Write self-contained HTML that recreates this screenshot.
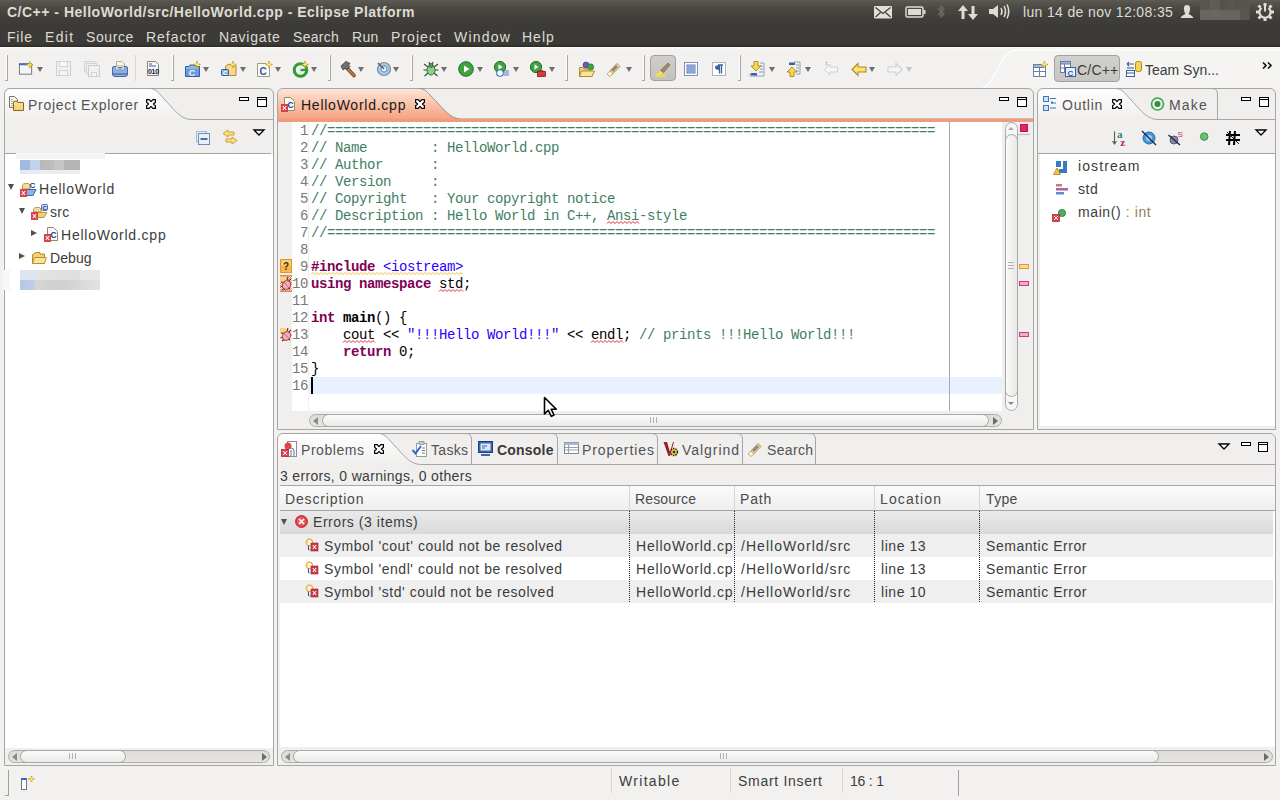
<!DOCTYPE html>
<html><head><meta charset="utf-8">
<style>
*{box-sizing:border-box;margin:0;padding:0}
html,body{width:1280px;height:800px;overflow:hidden;background:#f2f1f0;font-family:"Liberation Sans",sans-serif;position:relative}
.a{position:absolute}
svg{overflow:visible}
.t{position:absolute;white-space:pre;font-family:"Liberation Sans",sans-serif;font-size:14px;color:#3c3c3c;line-height:16px}
#hdr{left:0;top:0;width:1280px;height:47px;background:linear-gradient(#5e5b55 0px,#55524c 3px,#4a4843 9px,#3f3e3a 18px,#3c3b37 26px,#3b3a36 44px,#302f2b 46px,#2a2926 47px)}
#title{left:7px;top:4px;font-weight:bold;font-size:14px;color:#dfdbd2;letter-spacing:0.5px}
.menu{top:29px;color:#dfdbd2;font-size:14px;letter-spacing:0.3px}
#tb{left:0;top:47px;width:1280px;height:41px;background:linear-gradient(#fbfbfa 0px,#f4f3f2 2px,#f2f1f0 4px)}
.sep{position:absolute;top:55px;width:1px;height:26px;background:#a9a7a3;box-shadow:-1px 0 0 #fff}.sep:after{content:"";position:absolute;left:-2px;bottom:0;width:2px;height:1px;background:#a9a7a3}.sep.faint{background:#d9d7d4;box-shadow:none}.sep.faint:after{display:none}
.dd{position:absolute;top:67px;width:0;height:0;border-left:3.5px solid transparent;border-right:3.5px solid transparent;border-top:5px solid #6f6f6f}
.dd.dis{border-top-color:#c4c4c4}
.ic{position:absolute;top:61px;width:16px;height:16px}
.pbox{position:absolute;border:1px solid #a6a6a6;border-radius:6px 6px 0 0;background:#f0efee}
.tab{letter-spacing:0.55px;color:#535353}
.tree{letter-spacing:0.6px;color:#3c3c3c}
.x{position:absolute;width:10px;height:10px}
.minb{position:absolute;width:10px;height:4px;border:1px solid #000;border-width:1px 1px 1px 1px;background:#fff}
.maxb{position:absolute;width:10px;height:10px;border:1px solid #000;background:linear-gradient(#fff 0,#fff 1px,#000 1px,#000 2px,#fff 2px)}
.tri-d{position:absolute;width:0;height:0;border-left:3.5px solid transparent;border-right:3.5px solid transparent;border-top:6px solid #505050}
.tri-r{position:absolute;width:0;height:0;border-top:3.5px solid transparent;border-bottom:3.5px solid transparent;border-left:6px solid #505050}
.code{position:absolute;font-family:"Liberation Mono",monospace;font-size:14px;letter-spacing:-0.4px;line-height:17px;white-space:pre;color:#000;padding-top:1px}
.cm{color:#3f7f5f}
.kw{color:#7f0055;font-weight:bold}
.st{color:#2a00ff}
.sqr{text-decoration:underline wavy #ff3030;text-decoration-thickness:1px;text-underline-offset:2px}
.sqy{text-decoration:underline wavy #f0c040;text-decoration-thickness:1px;text-underline-offset:2px}
.hsb{position:absolute;height:13px;border:1px solid #aeaca8;border-radius:7px;background:linear-gradient(#dedcd9,#e6e4e1)}
.thumb{position:absolute;height:13px;border:1px solid #a9a7a3;border-radius:7px;background:linear-gradient(#fbfbfb,#ebeae8)}
.vsb{position:absolute;width:13px;border:1px solid #aeaca8;border-radius:7px;background:#f7f7f7}
.vthumb{position:absolute;width:13px;border:1px solid #a9a7a3;border-radius:7px;background:linear-gradient(90deg,#fbfbfb,#e9e8e6)}
.grip{position:absolute;width:7px;height:6px;border-left:1px solid #b0b0b0;border-right:1px solid #b0b0b0;background:linear-gradient(90deg,transparent 2px,#b0b0b0 2px,#b0b0b0 3px,transparent 3px)}
.vgrip{position:absolute;width:6px;height:7px;border-top:1px solid #b0b0b0;border-bottom:1px solid #b0b0b0;background:linear-gradient(transparent 2px,#b0b0b0 2px,#b0b0b0 3px,transparent 3px)}
.arrl{position:absolute;width:0;height:0;border-top:4px solid transparent;border-bottom:4px solid transparent;border-right:5px solid #8a8a8a}
.arrr{position:absolute;width:0;height:0;border-top:4px solid transparent;border-bottom:4px solid transparent;border-left:5px solid #6a6a6a}
.arru{position:absolute;width:0;height:0;border-left:3.5px solid transparent;border-right:3.5px solid transparent;border-bottom:3.5px solid #b0a8a8}
.arrd{position:absolute;width:0;height:0;border-left:3.5px solid transparent;border-right:3.5px solid transparent;border-top:3.5px solid #8a8a8a}
.th{top:491px;letter-spacing:0.85px;color:#4a4a4a}
.row{letter-spacing:0.55px;color:#3c3c3c}
.colsep{position:absolute;top:486px;width:1px;height:24px;background:#d6d6d6}
.dots{position:absolute;top:511px;width:1px;height:92px;background:repeating-linear-gradient(#222 0,#222 1px,transparent 1px,transparent 2px)}
</style></head><body>
<div id="hdr" class="a"></div>
<div id="title" class="t">C/C++ - HelloWorld/src/HelloWorld.cpp - Eclipse Platform</div>
<div class="t menu" style="left:7px;letter-spacing:0.8px">File</div>
<div class="t menu" style="left:45px;letter-spacing:1.3px">Edit</div>
<div class="t menu" style="left:86px;letter-spacing:0.6px">Source</div>
<div class="t menu" style="left:146px;letter-spacing:0.97px">Refactor</div>
<div class="t menu" style="left:219px;letter-spacing:0.8px">Navigate</div>
<div class="t menu" style="left:293px;letter-spacing:0.3px">Search</div>
<div class="t menu" style="left:352px;letter-spacing:0.3px">Run</div>
<div class="t menu" style="left:391px;letter-spacing:1.05px">Project</div>
<div class="t menu" style="left:454px;letter-spacing:1.2px">Window</div>
<div class="t menu" style="left:522px;letter-spacing:1.0px">Help</div>
<!-- indicators -->
<svg class="a" style="left:874px;top:6px" width="18" height="13" viewBox="0 0 18 13"><rect x="0" y="0" width="18" height="12.5" rx="1" fill="#e2dfd7"/><path d="M1.5 1.5 L9 7.5 L16.5 1.5 M1.5 11 L6.5 6.5 M16.5 11 L11.5 6.5" fill="none" stroke="#3c3b37" stroke-width="1.1"/></svg>
<svg class="a" style="left:905px;top:6px" width="21" height="12" viewBox="0 0 21 12"><rect x="1" y="1" width="17" height="10" rx="1.5" fill="none" stroke="#dfdbd2" stroke-width="1.5"/><rect x="3" y="3" width="13" height="6" fill="#dfdbd2"/><rect x="18.5" y="4" width="2" height="4" fill="#dfdbd2"/></svg>
<svg class="a" style="left:936px;top:3px" width="10" height="18" viewBox="0 0 10 18"><path d="M2 5 L8 11 L5 14 L5 3 L8 6 L2 12" fill="none" stroke="#6e6c66" stroke-width="1.3"/></svg>
<svg class="a" style="left:957px;top:3px" width="22" height="19" viewBox="0 0 22 19"><path d="M6 2 L1 8 L4.5 8 L4.5 16 L7.5 16 L7.5 8 L11 8 Z" fill="#dfdbd2"/><path d="M16 17 L11 11 L14.5 11 L14.5 3 L17.5 3 L17.5 11 L21 11 Z" fill="#dfdbd2"/></svg>
<svg class="a" style="left:988px;top:3px" width="22" height="17" viewBox="0 0 22 17"><path d="M1 6 L5 6 L10 2 L10 15 L5 11 L1 11 Z" fill="#dfdbd2"/><path d="M13 5 Q15 8.5 13 12 M16 3 Q19 8.5 16 14 M19 1.5 Q22.5 8.5 19 15.5" fill="none" stroke="#dfdbd2" stroke-width="1.5"/></svg>
<div class="t" style="left:1023px;top:4px;color:#dfdbd2;font-size:14px;letter-spacing:0.35px">lun 14 de nov 12:08:35</div>
<svg class="a" style="left:1179px;top:4px" width="16" height="16" viewBox="0 0 16 16"><path d="M8 1 C10.5 1 11.3 3 11 5.5 C10.8 7.5 10 9 9.5 10 C11.5 11 14 12 14.5 14 L1.5 14 C2 12 4.5 11 6.5 10 C6 9 5.2 7.5 5 5.5 C4.7 3 5.5 1 8 1 Z" fill="#e0ddd5"/></svg>
<div class="a" style="left:1200px;top:0px;width:50px;height:10px;background:linear-gradient(90deg,#59554f 0,#59554f 10px,#625d57 10px,#5d5953 20px,#544f4a 20px,#5b5751 34px,#57534d 34px,#57534d 50px)"></div>
<div class="a" style="left:1200px;top:10px;width:50px;height:10px;background:linear-gradient(90deg,#6a655e 0,#6b665f 20px,#68635c 20px,#69645d 40px,#5a5651 40px,#57534e 50px)"></div>
<svg class="a" style="left:1256px;top:3px" width="18" height="18" viewBox="0 0 18 18"><g fill="#e0ddd5"><rect x="7.5" y="0" width="3" height="3"/><rect x="7.5" y="15" width="3" height="3"/><rect x="0" y="7.5" width="3" height="3"/><rect x="15" y="7.5" width="3" height="3"/><rect x="2" y="2" width="3" height="3" transform="rotate(45 3.5 3.5)"/><rect x="13" y="2" width="3" height="3" transform="rotate(45 14.5 3.5)"/><rect x="2" y="13" width="3" height="3" transform="rotate(45 3.5 14.5)"/><rect x="13" y="13" width="3" height="3" transform="rotate(45 14.5 14.5)"/></g><path d="M5.5 4.8 A5.6 5.6 0 1 0 12.5 4.8" fill="none" stroke="#e0ddd5" stroke-width="2.2"/><rect x="8" y="1.5" width="2" height="7" fill="#e0ddd5"/></svg>
<div id="tb" class="a"></div>
<!-- perspective area curve -->
<svg class="a" style="left:960px;top:47px" width="320" height="41" viewBox="0 0 320 41"><path d="M0 41 L22 41 C30 41 36 22 44 10 C48 4 52 3 60 3 L320 3 L320 41 Z" fill="#f5f4f3"/><path d="M22 41 C30 41 36 22 44 10 C48 4 52 3 60 3 L320 3" fill="none" stroke="#ffffff" stroke-width="1.2"/></svg>
<!-- grip and separators -->
<div class="sep" style="left:7px;top:55px;height:26px"></div>
<div class="sep faint" style="left:135px"></div>
<div class="sep" style="left:173px"></div>
<div class="sep" style="left:330px"></div>
<div class="sep" style="left:412px"></div>
<div class="sep" style="left:567px"></div>
<div class="sep" style="left:644px"></div>
<div class="sep" style="left:740px"></div>
<!-- dropdown arrows -->
<div class="dd" style="left:37px"></div>
<div class="dd" style="left:203px"></div>
<div class="dd" style="left:240px"></div>
<div class="dd" style="left:275px"></div>
<div class="dd" style="left:311px"></div>
<div class="dd" style="left:358px"></div>
<div class="dd" style="left:393px"></div>
<div class="dd" style="left:441px"></div>
<div class="dd" style="left:477px"></div>
<div class="dd" style="left:513px"></div>
<div class="dd" style="left:549px"></div>
<div class="dd" style="left:626px"></div>
<div class="dd" style="left:769px"></div>
<div class="dd" style="left:805px"></div>
<div class="dd" style="left:869px"></div>
<div class="dd dis" style="left:906px"></div>
<!-- new -->
<svg class="ic" style="left:18px" viewBox="0 0 17 16"><rect x="1.5" y="2.5" width="13" height="11" fill="#eef5fb" stroke="#7a7565"/><rect x="1" y="2" width="12" height="2" fill="#3f6fb5"/><path d="M12.5 0 L12.5 7 M9 3.5 L16 3.5" stroke="#d9a400" stroke-width="1.6"/><path d="M12.5 1.5 L12.5 5.5 M10.5 3.5 L14.5 3.5" stroke="#fff1a8" stroke-width="0.8"/></svg>
<!-- save disabled -->
<svg class="ic" style="left:56px" viewBox="0 0 16 16"><rect x="0.5" y="0.5" width="14" height="14" fill="#f0f0f0" stroke="#cfcfcf"/><rect x="3.5" y="0.5" width="8" height="5" fill="#f7f7f7" stroke="#d2d2d2"/><rect x="3.5" y="9.5" width="8" height="5" fill="#f4f4f4" stroke="#d2d2d2"/></svg>
<svg class="ic" style="left:84px" viewBox="0 0 16 16"><rect x="0.5" y="0.5" width="10" height="10" fill="#f2f2f2" stroke="#d0d0d0"/><rect x="2.5" y="2.5" width="10" height="10" fill="#f2f2f2" stroke="#d0d0d0"/><rect x="4.5" y="4.5" width="11" height="11" fill="#f0f0f0" stroke="#cccccc"/><rect x="7.5" y="11.5" width="5" height="4" fill="#f4f4f4" stroke="#d2d2d2"/></svg>
<!-- print -->
<svg class="ic" style="left:112px" viewBox="0 0 16 16"><path d="M4.5 0.5 L10 0.5 L12.5 3 L12.5 7 L4.5 7 Z" fill="#fdf6e0" stroke="#b9ad8c"/><path d="M0.5 7 Q0.5 5.5 2 5.5 L14 5.5 Q15.5 5.5 15.5 7 L15.5 13 Q15.5 15.5 13 15.5 L3 15.5 Q0.5 15.5 0.5 13 Z" fill="#8fb0dd" stroke="#46679f"/><rect x="4" y="5" width="8" height="4" fill="#fff" stroke="#8a8a8a" stroke-width="0.7"/><path d="M5.5 6.5 L10.5 6.5 M5.5 8 L10.5 8" stroke="#4a6ea8" stroke-width="0.9"/><rect x="1" y="12" width="14" height="2" fill="#5d82c0"/></svg>
<!-- 010 -->
<svg class="ic" style="left:147px" viewBox="0 0 16 16"><path d="M0.5 0.5 L8.5 0.5 L11.5 3.5 L11.5 14.5 L0.5 14.5 Z" fill="#f4f8fd" stroke="#8a8270"/><path d="M2 3 L5 3 M2 5 L9 5" stroke="#3a4a6a" stroke-width="0.9"/><text x="1" y="13" font-family="Liberation Sans" font-weight="bold" font-size="7" letter-spacing="-0.3" fill="#0e1e3e">010</text></svg>
<!-- C project -->
<svg class="ic" style="left:185px" viewBox="0 0 16 16"><path d="M0.5 5.5 L4 5.5 L5 4 L11 4 L11 5.5 L14.5 5.5 L14.5 15.5 L0.5 15.5 Z" fill="#8db3e2" stroke="#2f5fa6"/><path d="M1 8 L14 8 L14 15 L1 15 Z" fill="#6e9ad6"/><text x="3.8" y="14.5" font-family="Liberation Sans" font-weight="bold" font-size="9" fill="#eaf2ff">C</text><path d="M12 0 L12 7 M8.5 3.5 L15.5 3.5" stroke="#d9a400" stroke-width="1.6"/><path d="M12 1.5 L12 5.5 M10 3.5 L14 3.5" stroke="#fff1a8" stroke-width="0.8"/></svg>
<!-- folder new -->
<svg class="ic" style="left:221px" viewBox="0 0 16 16"><path d="M4.5 5.5 L7 3.5 L11 3.5 L11 5 L15 5 L15 14.5 L4.5 14.5 Z" fill="#f7d88a" stroke="#b38a2e"/><rect x="0.5" y="8.5" width="7" height="6" rx="1" fill="#8db3e2" stroke="#2f5fa6"/><text x="2" y="14" font-family="Liberation Sans" font-weight="bold" font-size="6" fill="#fff">C</text><path d="M12 0 L12 7 M8.5 3.5 L15.5 3.5" stroke="#d9a400" stroke-width="1.6"/><path d="M12 1.5 L12 5.5 M10 3.5 L14 3.5" stroke="#fff1a8" stroke-width="0.8"/></svg>
<!-- C class -->
<svg class="ic" style="left:257px" viewBox="0 0 16 16"><path d="M0.5 2.5 L9 2.5 L12.5 6 L12.5 15.5 L0.5 15.5 Z" fill="#fbfbf6" stroke="#9e9a8c"/><text x="2.5" y="13.5" font-family="Liberation Sans" font-weight="bold" font-size="10" fill="#2f55a8">C</text><path d="M12 0 L12 7 M8.5 3.5 L15.5 3.5" stroke="#d9a400" stroke-width="1.6"/><path d="M12 1.5 L12 5.5 M10 3.5 L14 3.5" stroke="#fff1a8" stroke-width="0.8"/></svg>
<!-- G green -->
<svg class="ic" style="left:293px" viewBox="0 0 16 16"><circle cx="7.5" cy="9" r="6.3" fill="none" stroke="#2f9a3a" stroke-width="3"/><path d="M7.5 9 L13 9" stroke="#2f9a3a" stroke-width="2.4"/><path d="M12 0 L12 7 M8.5 3.5 L15.5 3.5" stroke="#d9a400" stroke-width="1.6"/><path d="M12 1.5 L12 5.5 M10 3.5 L14 3.5" stroke="#fff1a8" stroke-width="0.8"/></svg>
<!-- hammer -->
<svg class="ic" style="left:340px" viewBox="0 0 16 16"><path d="M6 6 L14 14.5" stroke="#6b3f1a" stroke-width="3.6" stroke-linecap="round"/><path d="M6 6 L14 14.5" stroke="#c27a3c" stroke-width="2" stroke-linecap="round"/><path d="M1 5 L6 0.5 L10 2.5 L8.5 4 L10 5.5 L7 8.5 L5.5 7 L3 9 Z" fill="#707070" stroke="#3a3a3a" stroke-width="0.8"/></svg>
<!-- gear -->
<svg class="ic" style="left:376px" viewBox="0 0 16 16"><circle cx="8" cy="8" r="6.5" fill="#a9c6e0" stroke="#6f8fb0" stroke-width="1.2"/><circle cx="8" cy="8" r="3" fill="#e8f0f8" stroke="#6f8fb0"/><path d="M2 2 L8 8" stroke="#555" stroke-width="1.2"/></svg>
<!-- bug -->
<svg class="ic" style="left:423px" viewBox="0 0 16 16"><path d="M1 3 L5 6 M15 3 L11 6 M0.5 9 L4 9 M15.5 9 L12 9 M1.5 15 L5 12 M14.5 15 L11 12 M6 1 L7 4 M10 1 L9 4" stroke="#2f4f2f" stroke-width="1.1"/><ellipse cx="8" cy="9" rx="4" ry="5" fill="#8fcf8f" stroke="#2f6f3a"/><circle cx="8" cy="4.5" r="2" fill="#5f9f5f" stroke="#2f4f2f" stroke-width="0.8"/></svg>
<!-- run -->
<svg class="ic" style="left:458px" viewBox="0 0 16 16"><circle cx="8" cy="8" r="7.3" fill="#3fa33f" stroke="#1e6e24"/><path d="M6 4.5 L11.5 8 L6 11.5 Z" fill="#fff"/></svg>
<svg class="ic" style="left:494px" viewBox="0 0 16 16"><circle cx="6" cy="6" r="5.6" fill="#3fa33f" stroke="#1e6e24"/><path d="M4.5 3.3 L8.5 6 L4.5 8.7 Z" fill="#fff"/><circle cx="6" cy="12" r="3.3" fill="#fff" stroke="#3b6fc0" stroke-width="1.1"/><path d="M10 10 L15 10 M10 12 L15 12 M10 14 L15 14" stroke="#3b6fc0" stroke-width="0.9"/></svg>
<svg class="ic" style="left:530px" viewBox="0 0 16 16"><circle cx="6" cy="6" r="5.6" fill="#3fa33f" stroke="#1e6e24"/><path d="M4.5 3.3 L8.5 6 L4.5 8.7 Z" fill="#fff"/><rect x="7.5" y="10.5" width="8" height="5" fill="#d63a3a" stroke="#8e1c1c" stroke-width="0.8"/><path d="M10 10.5 L10 9.5 L13 9.5 L13 10.5" fill="none" stroke="#8e1c1c" stroke-width="0.8"/></svg>
<!-- open folder with balls -->
<svg class="ic" style="left:579px" viewBox="0 0 16 16"><circle cx="7" cy="4" r="3" fill="#6a5acd" stroke="#3a2a8d" stroke-width="0.6"/><circle cx="11.5" cy="6" r="3.2" fill="#3aa64a" stroke="#1d6e28" stroke-width="0.6"/><path d="M0.5 6.5 L4 6.5 L5 8 L10 8 L10 15.5 L0.5 15.5 Z" fill="#f4cf76" stroke="#b38a2e"/><path d="M2.5 10 L15.5 10 L13 15.5 L0.5 15.5 Z" fill="#fbe29d" stroke="#b38a2e"/></svg>
<!-- flashlight -->
<svg class="ic" style="left:606px" viewBox="0 0 16 16"><path d="M3 11 L11 2.5 L14 5.5 L6 13.5 Z" fill="#f3d89a" stroke="#a98a40" stroke-width="0.9"/><path d="M1 13 L4 10 L7 13 L4 15.5 Z" fill="#fff6cc" stroke="#b9a46a" stroke-width="0.9"/><path d="M5 9 L10 4 L12 6 L7 11 Z" fill="#8a8a8a"/></svg>
<!-- pressed toggle -->
<div class="a" style="left:650px;top:55px;width:26px;height:26px;border:1px solid #a3a19c;border-radius:4px;background:linear-gradient(#cfcdc9,#c4c2be)"></div>
<svg class="ic" style="left:655px" viewBox="0 0 16 16"><path d="M1 14 L6 9 L9 12 L4 15 Z" fill="#f7e04a"/><path d="M5.5 9.5 L13 2 L15 4 L8.5 11.5 Z" fill="#9a8a70" stroke="#6a5a40" stroke-width="0.6"/><path d="M0.5 15 L9 15 L10 13" fill="none" stroke="#f7e04a" stroke-width="1.5"/></svg>
<!-- block -->
<svg class="ic" style="left:683px" viewBox="0 0 16 16"><rect x="1.5" y="1.5" width="13" height="13" fill="#fff" stroke="#7f94b8"/><rect x="4" y="4" width="8" height="8" fill="#c5d5ef" stroke="#3c5fa8" stroke-width="0.8"/><path d="M5 6 L11 6 M5 8 L11 8 M5 10 L11 10" stroke="#3c5fa8" stroke-width="0.8"/></svg>
<!-- pilcrow -->
<svg class="ic" style="left:711px" viewBox="0 0 16 16"><rect x="1.5" y="1.5" width="13" height="13" fill="#fff" stroke="#a7b4c8"/><path d="M7 4 L12 4 M8.5 4 L8.5 12.5 M10.5 4 L10.5 12.5" stroke="#3c5fa8" stroke-width="1.3"/><path d="M8.5 4 Q4 4 4 6.5 Q4 9 8.5 9 Z" fill="#3c5fa8"/></svg>
<!-- next/prev annotation -->
<svg class="ic" style="left:749px" viewBox="0 0 16 16"><path d="M5 0.5 L9 0.5 L9 5 L12 5 L7 10 L2 5 L5 5 Z" fill="#f7d94a" stroke="#a88a1c" stroke-width="0.9"/><path d="M11 2 L15 2 L15 15 L1 15 L1 12" fill="none" stroke="#8a99b0" stroke-width="0.9"/><path d="M11 5 L14 5 M11 8 L14 8 M10 11 L14 11" stroke="#7c8fb8" stroke-width="0.9"/><rect x="2" y="12" width="6" height="2.5" fill="#3c5fa8"/></svg>
<svg class="ic" style="left:785px" viewBox="0 0 16 16"><path d="M5 15.5 L9 15.5 L9 11 L12 11 L7 6 L2 11 L5 11 Z" fill="#f7d94a" stroke="#a88a1c" stroke-width="0.9"/><path d="M9 1 L15 1 L15 13 L11 13" fill="none" stroke="#8a99b0" stroke-width="0.9"/><path d="M11 4 L14 4 M11 7 L14 7 M11 10 L14 10" stroke="#7c8fb8" stroke-width="0.9"/><rect x="4" y="1.5" width="6" height="2.5" fill="#3c5fa8"/></svg>
<!-- back disabled -->
<svg class="ic" style="left:823px" viewBox="0 0 16 16"><path d="M7 3 L1.5 8.5 L7 14 L7 11 L14.5 11 L14.5 6 L7 6 Z" fill="#f6f6f6" stroke="#cfcfcf"/><path d="M2 1 L5 4 M5 1 L2 4 M3.5 0.5 L3.5 4.5" stroke="#c8c8c8" stroke-width="0.9"/></svg>
<svg class="ic" style="left:851px" viewBox="0 0 16 16"><path d="M7 2.5 L1 8.5 L7 14.5 L7 11 L15 11 L15 6 L7 6 Z" fill="#fbe27a" stroke="#b08a1e" stroke-width="1.1"/></svg>
<svg class="ic" style="left:887px" viewBox="0 0 16 16"><path d="M9 2.5 L15 8.5 L9 14.5 L9 11 L1 11 L1 6 L9 6 Z" fill="#f6f6f6" stroke="#cfcfcf" stroke-width="1.1"/></svg>
<!-- right side -->
<svg class="ic" style="left:1032px" viewBox="0 0 16 16"><rect x="1.5" y="3.5" width="12" height="12" fill="#fff" stroke="#6a7f9f"/><rect x="1.5" y="3.5" width="12" height="3" fill="#9fb8db" stroke="#6a7f9f"/><path d="M7.5 6.5 L7.5 15.5 M1.5 10.5 L13.5 10.5" stroke="#6a7f9f"/><path d="M12.5 0 L12.5 7 M9 3.5 L16 3.5" stroke="#d9a400" stroke-width="1.6"/><path d="M12.5 1.5 L12.5 5.5 M10.5 3.5 L14.5 3.5" stroke="#fff1a8" stroke-width="0.8"/></svg>
<div class="a" style="left:1054px;top:55px;width:66px;height:27px;border:1px solid #a3a19c;border-radius:4px;background:linear-gradient(#d3d1cd,#c7c5c1)"></div>
<svg class="ic" style="left:1060px" viewBox="0 0 16 16"><rect x="0.5" y="0.5" width="10" height="11" fill="#fff" stroke="#6a7f9f"/><rect x="0.5" y="0.5" width="10" height="2.5" fill="#9fb8db" stroke="#6a7f9f"/><path d="M4.5 3 L4.5 11.5 M0.5 7 L10.5 7" stroke="#6a7f9f"/><rect x="5.5" y="6.5" width="10" height="9" fill="#e8f0fb" stroke="#3c5fa8"/><text x="7.5" y="14.5" font-family="Liberation Sans" font-weight="bold" font-size="8" fill="#2f55a8">C</text></svg>
<div class="t" style="left:1077px;top:62px;font-size:14px;letter-spacing:0.2px;color:#3c3c3c">C/C++</div>
<svg class="ic" style="left:1126px" viewBox="0 0 16 16"><rect x="9.5" y="0.5" width="6" height="10" rx="2" fill="#f6d35a" stroke="#a88a1c"/><path d="M1 3 L8 3 M1 3 L3 1 M1 3 L3 5" stroke="#3c5fa8" stroke-width="1.1" fill="none"/><path d="M1 7 L8 7" stroke="#3c5fa8" stroke-width="1.1"/><rect x="0.5" y="9.5" width="8" height="6" fill="#fff" stroke="#3c5fa8"/><path d="M0.5 12 L8.5 12" stroke="#3c5fa8"/></svg>
<div class="t" style="left:1145px;top:62px;font-size:14px;letter-spacing:0px;color:#3c3c3c">Team Syn...</div>
<svg class="a" style="left:1262px;top:62px" width="11" height="7" viewBox="0 0 11 7"><path d="M1 0.5 L4 3.5 L1 6.5 M6 0.5 L9 3.5 L6 6.5" fill="none" stroke="#111" stroke-width="1.6"/></svg>
<!-- ============ PROJECT EXPLORER ============ -->
<div class="pbox" style="left:4px;top:88px;width:270px;height:678px"></div>
<svg class="a" style="left:5px;top:89px" width="268" height="65" viewBox="0 0 268 65">
<defs><linearGradient id="tabw" x1="0" y1="0" x2="0" y2="31" gradientUnits="userSpaceOnUse"><stop offset="0" stop-color="#ffffff"/><stop offset="0.6" stop-color="#f6f5f4"/><stop offset="1" stop-color="#f0efee"/></linearGradient></defs>
<path d="M0 65 L0 7 Q0 0 7 0 L144.5 0 C149.5 0 152.5 3 155.5 6.5 L166.5 18.5 C171.5 24 177.5 31 187 31 L268 31 L268 65 Z" fill="url(#tabw)"/>
<rect x="0" y="31" width="268" height="34" fill="#f0efee"/>
<path d="M144.5 -0.5 C149.5 -0.5 152.5 2.5 155.5 6 L166.5 18 C171.5 23.5 177.5 30.5 187 30.5 L268 30.5" fill="none" stroke="#a6a6a6" stroke-width="1"/>
<path d="M0 64.5 L266 64.5" stroke="#a6a6a6"/>
</svg>
<svg class="ic" style="left:8px;top:95px" viewBox="0 0 16 16"><path d="M1.5 1.5 L6.5 1.5 L9.5 4.5 L9.5 12.5 L1.5 12.5 Z" fill="#fbfaf4" stroke="#7a735a"/><path d="M3 4.5 L5 4.5 M3 6.5 L6 6.5 M3 8.5 L5 8.5 M3 10.5 L5 10.5" stroke="#8a90a8" stroke-width="0.8"/><path d="M5.5 7.5 L7 6 L9 6 L10 7.5 L15.5 7.5 L15.5 15.5 L5.5 15.5 Z" fill="#f5d67a" stroke="#86672a"/><path d="M6.5 9 L14.5 9" stroke="#fbe9a8" stroke-width="1"/></svg>
<div class="t tab" style="left:28px;top:97px;letter-spacing:0.7px">Project Explorer</div>
<svg class="x" style="left:146px;top:99px" viewBox="0 0 10 10"><path d="M0.6 0.6 L3.2 0.6 L5 2.6 L6.8 0.6 L9.4 0.6 L9.4 3.2 L7.4 5 L9.4 6.8 L9.4 9.4 L6.8 9.4 L5 7.4 L3.2 9.4 L0.6 9.4 L0.6 6.8 L2.6 5 L0.6 3.2 Z" fill="#fff" stroke="#000" stroke-width="1.2" stroke-linejoin="round"/></svg>
<div class="minb" style="left:239px;top:97px"></div><div class="maxb" style="left:257px;top:97px"></div>
<svg class="ic" style="left:195px;top:130px" viewBox="0 0 16 16"><rect x="1.5" y="1.5" width="10" height="10" fill="#eaf2fa" stroke="#9db6d3"/><rect x="3.5" y="3.5" width="11" height="11" fill="#e4f0fb" stroke="#6f8eb5"/><path d="M5.5 9 L12.5 9" stroke="#2c5089" stroke-width="1.6"/></svg>
<svg class="ic" style="left:222px;top:129px" viewBox="0 0 16 16"><path d="M6 1 L1 4.5 L6 8 L6 6 L12 6 L12 3 L6 3 Z" fill="#fbe08a" stroke="#c79a25" stroke-width="0.9"/><path d="M10 8 L15 11.5 L10 15 L10 13 L4 13 L4 10 L10 10 Z" fill="#fbe08a" stroke="#c79a25" stroke-width="0.9"/></svg>
<svg class="a" style="left:253px;top:129px" width="12" height="7" viewBox="0 0 12 7"><path d="M1 1 L11 1 L6 6 Z" fill="#fff" stroke="#000" stroke-width="1.3" stroke-linejoin="miter"/></svg>
<div class="a" style="left:5px;top:154px;width:268px;height:594px;background:#fff"></div>
<!-- blurred items -->
<div class="a" style="left:16px;top:153px;width:89px;height:6px;background:#f4f4f4"></div>
<div class="a" style="left:20px;top:160px;width:60px;height:10px;background:linear-gradient(90deg,#a2b8df 0,#a2b8df 10px,#c3d2eb 10px,#c3d2eb 20px,#b9b8bb 20px,#bdbcbf 34px,#c4c3c6 34px,#c6c5c8 44px,#b4b3b6 44px)"></div>
<div class="a" style="left:20px;top:170px;width:60px;height:4px;background:linear-gradient(90deg,#e4ebf6 0,#e4ebf6 20px,#ededed 20px)"></div>
<div class="a" style="left:20px;top:270px;width:80px;height:10px;background:linear-gradient(90deg,#dde4f1 0,#dde4f1 15px,#e3e3e3 15px,#dedede 60px,#e7e7e7 60px)"></div>
<div class="a" style="left:20px;top:280px;width:80px;height:10px;background:linear-gradient(90deg,#b5c6e6 0,#c0d0ea 15px,#d6d6d6 15px,#cfcfcf 40px,#d8d8d8 60px,#e2e2e2 80px)"></div>
<div class="a" style="left:2px;top:270px;width:8px;height:20px;background:#f7f7f7"></div>
<!-- tree -->
<div class="tri-d" style="left:8px;top:184px"></div>
<svg class="ic" style="left:20px;top:181px" viewBox="0 0 16 16"><path d="M2.5 8 L2.5 4 Q3.5 2.5 5.5 2.5 L8.5 2.5 L10 4 L10 8 Z" fill="#f6dc96" stroke="#b8944a"/><path d="M5 8.5 L16 8.5 L13 14.5 L3 14.5 Z" fill="#8ab2ea" stroke="#3a68ae"/><text x="9.6" y="6.6" font-family="Liberation Sans" font-weight="bold" font-size="8" fill="#1e3c78">C</text><rect x="0" y="8" width="7" height="8" fill="#d8404a"/><path d="M1.8 10 L5.2 14 M5.2 10 L1.8 14" stroke="#fff" stroke-width="1.1"/></svg>
<div class="t tree" style="left:39px;top:181px;letter-spacing:0.78px">HelloWorld</div>
<div class="tri-d" style="left:19px;top:208px"></div>
<svg class="ic" style="left:31px;top:204px" viewBox="0 0 16 16"><path d="M2.5 8 L2.5 5 Q3.5 3.5 5.5 3.5 L8.5 3.5 L10 5 L10 8 Z" fill="#f6dc96" stroke="#b8944a"/><path d="M5 8.5 L16 8.5 L13 13.5 L3 13.5 Z" fill="#f5cf72" stroke="#b8944a"/><rect x="10.5" y="0.5" width="6" height="6" rx="1" fill="#c8daf4" stroke="#3a68ae" stroke-width="0.9"/><text x="11.6" y="5.8" font-family="Liberation Sans" font-weight="bold" font-size="6" fill="#1e3c78">C</text><rect x="0" y="8" width="7" height="8" fill="#d8404a"/><path d="M1.8 10 L5.2 14 M5.2 10 L1.8 14" stroke="#fff" stroke-width="1.1"/></svg>
<div class="t tree" style="left:50px;top:204px;letter-spacing:0.3px">src</div>
<div class="tri-r" style="left:31px;top:230px"></div>
<svg class="ic" style="left:43px;top:226px" viewBox="0 0 16 16"><path d="M4.5 1.5 L10.5 1.5 L14.5 5.5 L14.5 14.5 L4.5 14.5 Z" fill="#f6fafd" stroke="#9a8a60"/><text x="7.6" y="12" font-family="Liberation Sans" font-weight="bold" font-size="8.5" fill="#1e3c78">C</text><rect x="1" y="8" width="7" height="8" fill="#d8404a"/><path d="M2.8 10 L6.2 14 M6.2 10 L2.8 14" stroke="#fff" stroke-width="1.1"/></svg>
<div class="t tree" style="left:61px;top:227px;letter-spacing:0.77px">HelloWorld.cpp</div>
<div class="tri-r" style="left:19px;top:253px"></div>
<svg class="ic" style="left:31px;top:250px" viewBox="0 0 16 16"><path d="M1.5 4.5 L5 2.5 L9 2.5 L9 4 L13.5 4 L13.5 13.5 L1.5 13.5 Z" fill="#f4cf76" stroke="#b58b2a"/><path d="M3.5 7.5 L15.5 7.5 L13.5 13.5 L1.5 13.5 Z" fill="#fbe29d" stroke="#b58b2a" stroke-width="0.9"/></svg>
<div class="t tree" style="left:50px;top:250px;letter-spacing:0.1px">Debug</div>
<!-- PE scrollbar -->
<div class="hsb" style="left:8px;top:750px;width:262px"></div>
<div class="thumb" style="left:20px;top:750px;width:106px"></div>
<div class="grip" style="left:69px;top:753px"></div>
<div class="arrl" style="left:12px;top:753px"></div>
<div class="arrr" style="left:262px;top:753px"></div>

<!-- ============ EDITOR ============ -->
<div class="pbox" style="left:277px;top:88px;width:757px;height:342px"></div>
<svg class="a" style="left:278px;top:89px" width="755" height="33" viewBox="0 0 755 33">
<defs><linearGradient id="tabo" x1="0" y1="0" x2="0" y2="1"><stop offset="0" stop-color="#fde4d8"/><stop offset="0.45" stop-color="#f9c3aa"/><stop offset="1" stop-color="#f59c7b"/></linearGradient></defs>
<path d="M0 33 L0 7 Q0 0 7 0 L141 0 C146 0 149 3 152 6.5 L163 17.5 C168 23 174 30 183.5 30 L755 30 L755 33 Z" fill="url(#tabo)"/>
<path d="M141 -0.5 C146 -0.5 149 2.5 152 6 L163 17.5 C168 23 174 30 183.5 30 L755 30" fill="none" stroke="#a09088" stroke-width="1"/>
<rect x="0" y="30" width="755" height="3" fill="#f49a7a"/>
</svg>
<svg class="ic" style="left:280px;top:96px" viewBox="0 0 16 16"><path d="M4.5 1.5 L10.5 1.5 L14.5 5.5 L14.5 14.5 L4.5 14.5 Z" fill="#f6fafd" stroke="#9a8a60"/><text x="7.6" y="12" font-family="Liberation Sans" font-weight="bold" font-size="8.5" fill="#1e3c78">C</text><rect x="1" y="8" width="7" height="8" fill="#d8404a"/><path d="M2.8 10 L6.2 14 M6.2 10 L2.8 14" stroke="#fff" stroke-width="1.1"/></svg>
<div class="t tab" style="left:301px;top:97px;letter-spacing:0.75px;color:#1a1a1a">HelloWorld.cpp</div>
<svg class="x" style="left:415px;top:99px" viewBox="0 0 10 10"><path d="M0.6 0.6 L3.2 0.6 L5 2.6 L6.8 0.6 L9.4 0.6 L9.4 3.2 L7.4 5 L9.4 6.8 L9.4 9.4 L6.8 9.4 L5 7.4 L3.2 9.4 L0.6 9.4 L0.6 6.8 L2.6 5 L0.6 3.2 Z" fill="#fff" stroke="#000" stroke-width="1.2" stroke-linejoin="round"/></svg>
<div class="minb" style="left:999px;top:97px"></div><div class="maxb" style="left:1017px;top:97px"></div>
<div class="a" style="left:278px;top:122px;width:755px;height:307px;background:#f0efee"></div>
<div class="a" style="left:292px;top:122px;width:710px;height:289px;background:#fff"></div>
<div class="a" style="left:308px;top:122px;width:1px;height:289px;background:#f4f0f0"></div>
<div class="a" style="left:309px;top:377px;width:693px;height:17px;background:#e8f2fe"></div>
<div class="a" style="left:949px;top:122px;width:1px;height:289px;background:#a8a8a8"></div>
<div class="code" style="left:292px;top:122px;width:16px;text-align:right;color:#787878">1
2
3
4
5
6
7
8
9
10
11
12
13
14
15
16</div>
<div class="code" style="left:311px;top:122px"><span class="cm">//============================================================================</span>
<span class="cm">// Name        : HelloWorld.cpp</span>
<span class="cm">// Author      :</span>
<span class="cm">// Version     :</span>
<span class="cm">// Copyright   : Your copyright notice</span>
<span class="cm">// Description : Hello World in C++, Ansi-style</span>
<span class="cm">//============================================================================</span>

<span class="kw">#include</span> <span class="st">&lt;iostream&gt;</span>
<span class="kw">using</span> <span class="kw">namespace</span> std;

<span class="kw">int</span> <b>main</b>() {
    cout &lt;&lt; <span class="st">"!!!Hello World!!!"</span> &lt;&lt; endl; <span class="cm">// prints !!!Hello World!!!</span>
    <span class="kw">return</span> 0;
}
</div>
<div class="a" style="left:311px;top:377px;width:2px;height:17px;background:#000"></div>
<svg class="a" style="left:607px;top:221px" width="32" height="3" viewBox="0 0 32 3"><path d="M0 2.5 L2 0.5 L4 2.5 L6 0.5 L8 2.5 L10 0.5 L12 2.5 L14 0.5 L16 2.5 L18 0.5 L20 2.5 L22 0.5 L24 2.5 L26 0.5 L28 2.5 L30 0.5 L32 2.5" fill="none" stroke="#e8303a" stroke-width="1"/></svg>
<svg class="a" style="left:311px;top:272px" width="152" height="3" viewBox="0 0 152 3"><path d="M0 2.5 L2 0.5 L4 2.5 L6 0.5 L8 2.5 L10 0.5 L12 2.5 L14 0.5 L16 2.5 L18 0.5 L20 2.5 L22 0.5 L24 2.5 L26 0.5 L28 2.5 L30 0.5 L32 2.5 L34 0.5 L36 2.5 L38 0.5 L40 2.5 L42 0.5 L44 2.5 L46 0.5 L48 2.5 L50 0.5 L52 2.5 L54 0.5 L56 2.5 L58 0.5 L60 2.5 L62 0.5 L64 2.5 L66 0.5 L68 2.5 L70 0.5 L72 2.5 L74 0.5 L76 2.5 L78 0.5 L80 2.5 L82 0.5 L84 2.5 L86 0.5 L88 2.5 L90 0.5 L92 2.5 L94 0.5 L96 2.5 L98 0.5 L100 2.5 L102 0.5 L104 2.5 L106 0.5 L108 2.5 L110 0.5 L112 2.5 L114 0.5 L116 2.5 L118 0.5 L120 2.5 L122 0.5 L124 2.5 L126 0.5 L128 2.5 L130 0.5 L132 2.5 L134 0.5 L136 2.5 L138 0.5 L140 2.5 L142 0.5 L144 2.5 L146 0.5 L148 2.5 L150 0.5 L152 2.5" fill="none" stroke="#f2c040" stroke-width="1"/></svg>
<svg class="a" style="left:439px;top:289px" width="24" height="3" viewBox="0 0 24 3"><path d="M0 2.5 L2 0.5 L4 2.5 L6 0.5 L8 2.5 L10 0.5 L12 2.5 L14 0.5 L16 2.5 L18 0.5 L20 2.5 L22 0.5 L24 2.5" fill="none" stroke="#e8303a" stroke-width="1"/></svg>
<svg class="a" style="left:343px;top:340px" width="32" height="3" viewBox="0 0 32 3"><path d="M0 2.5 L2 0.5 L4 2.5 L6 0.5 L8 2.5 L10 0.5 L12 2.5 L14 0.5 L16 2.5 L18 0.5 L20 2.5 L22 0.5 L24 2.5 L26 0.5 L28 2.5 L30 0.5 L32 2.5" fill="none" stroke="#e8303a" stroke-width="1"/></svg>
<svg class="a" style="left:591px;top:340px" width="32" height="3" viewBox="0 0 32 3"><path d="M0 2.5 L2 0.5 L4 2.5 L6 0.5 L8 2.5 L10 0.5 L12 2.5 L14 0.5 L16 2.5 L18 0.5 L20 2.5 L22 0.5 L24 2.5 L26 0.5 L28 2.5 L30 0.5 L32 2.5" fill="none" stroke="#e8303a" stroke-width="1"/></svg>
<!-- gutter markers -->
<svg class="a" style="left:280px;top:259px" width="12" height="14" viewBox="0 0 12 14"><rect x="0.5" y="0.5" width="11" height="13" fill="#f7b84e" stroke="#d99a30"/><rect x="1.5" y="1.5" width="9" height="5" fill="#fbd27e"/><text x="3" y="11" font-family="Liberation Sans" font-weight="bold" font-size="10" fill="#3a2a10">?</text></svg>
<svg class="a" style="left:280px;top:275px" width="13" height="17" viewBox="0 0 13 17"><defs><pattern id="chk" width="2" height="2" patternUnits="userSpaceOnUse"><rect width="2" height="2" fill="#fff"/><rect width="1" height="1" fill="#e5926a"/><rect x="1" y="1" width="1" height="1" fill="#e5926a"/></pattern></defs><rect x="0" y="0" width="12" height="17" fill="url(#chk)"/><rect x="0" y="0" width="12" height="1.5" fill="#d98a5a"/><rect x="0" y="15.5" width="12" height="1.5" fill="#d98a5a"/><g transform="translate(0,1)"><rect x="0" y="1" width="6" height="6" fill="#f6d77a"/><path d="M1 6 L4 6.5 M0.5 11 L3.5 9.5 M2 14 L5 12 M11 3 L8.5 5 M11.5 8 L9.5 8.5 M10 13.5 L9 11.5 M8 1 L7 4" stroke="#7a1e28" stroke-width="1.1"/><ellipse cx="6.5" cy="9" rx="3.8" ry="4.6" transform="rotate(35 6.5 9)" fill="#f2b0b4" stroke="#a03a48" stroke-width="1"/><path d="M4.5 6.5 L8.5 11.5" stroke="#c06070" stroke-width="0.8"/></g></svg>
<svg class="a" style="left:280px;top:327px" width="13" height="16" viewBox="0 0 13 16"><rect x="0" y="1" width="6" height="6" fill="#f6d77a"/><path d="M1 6 L4 6.5 M0.5 11 L3.5 9.5 M2 14 L5 12 M11 3 L8.5 5 M11.5 8 L9.5 8.5 M10 13.5 L9 11.5 M8 1 L7 4" stroke="#7a1e28" stroke-width="1.1"/><ellipse cx="6.5" cy="9" rx="3.8" ry="4.6" transform="rotate(35 6.5 9)" fill="#f2b0b4" stroke="#a03a48" stroke-width="1"/><path d="M4.5 6.5 L8.5 11.5" stroke="#c06070" stroke-width="0.8"/></svg>
<!-- vertical scrollbar -->
<div class="vsb" style="left:1005px;top:122px;height:289px"></div>
<div class="vthumb" style="left:1005px;top:134px;height:263px"></div>
<div class="vgrip" style="left:1008px;top:262px"></div>
<div class="arru" style="left:1008px;top:127px"></div>
<div class="arrd" style="left:1008px;top:402px"></div>
<!-- overview ruler -->
<div class="a" style="left:1020px;top:124px;width:8px;height:8px;background:#e8206e;border:1px solid #c01050"></div>
<div class="a" style="left:1018px;top:134px;width:12px;height:1px;background:#b8b8b8"></div>
<div class="a" style="left:1019px;top:264px;width:10px;height:5px;background:#fbd88a;border:1px solid #d8a030"></div>
<div class="a" style="left:1019px;top:281px;width:10px;height:5px;background:#f4a8cc;border:1px solid #c83a86"></div>
<div class="a" style="left:1019px;top:332px;width:10px;height:5px;background:#f4a8cc;border:1px solid #c83a86"></div>
<!-- horizontal scrollbar -->
<div class="hsb" style="left:309px;top:414px;width:693px"></div>
<div class="thumb" style="left:322px;top:414px;width:667px"></div>
<div class="grip" style="left:650px;top:417px"></div>
<div class="arrl" style="left:313px;top:417px"></div>
<div class="arrr" style="left:993px;top:417px"></div>
<!-- ============ OUTLINE ============ -->
<div class="pbox" style="left:1037px;top:88px;width:239px;height:342px"></div>
<svg class="a" style="left:1038px;top:89px" width="237" height="65" viewBox="0 0 237 65">
<path d="M0 65 L0 7 Q0 0 7 0 L77.5 0 C82.5 0 85.5 3 88.5 6.5 L99.5 18.5 C104.5 24 110.5 31 120 31 L237 31 L237 65 Z" fill="url(#tabw)"/>
<rect x="0" y="31" width="237" height="34" fill="#f0efee"/>
<path d="M77.5 -0.5 C82.5 -0.5 85.5 2.5 88.5 6 L99.5 18 C104.5 23.5 110.5 30.5 120 30.5 L237 30.5" fill="none" stroke="#a6a6a6"/>
<path d="M179.5 30.5 L179.5 5 Q179.5 -0.5 174 -0.5" fill="none" stroke="#a6a6a6"/>
<path d="M0 64.5 L237 64.5" stroke="#a6a6a6"/>
</svg>
<svg class="ic" style="left:1043px;top:96px" viewBox="0 0 16 16"><rect x="0.5" y="0.5" width="5" height="5" fill="#cfe3f7" stroke="#3c78b8"/><rect x="0.5" y="9.5" width="5" height="5" fill="#cfe3f7" stroke="#3c78b8"/><path d="M7 2.5 L13 2.5 M8 7 L13 7 M7 12 L13 12" stroke="#3c78b8" stroke-width="1.2"/><rect x="8" y="5.5" width="2" height="2" fill="#3c78b8"/></svg>
<div class="t tab" style="left:1062px;top:97px;letter-spacing:0.75px">Outlin</div>
<svg class="x" style="left:1112px;top:99px" viewBox="0 0 10 10"><path d="M0.6 0.6 L3.2 0.6 L5 2.6 L6.8 0.6 L9.4 0.6 L9.4 3.2 L7.4 5 L9.4 6.8 L9.4 9.4 L6.8 9.4 L5 7.4 L3.2 9.4 L0.6 9.4 L0.6 6.8 L2.6 5 L0.6 3.2 Z" fill="#fff" stroke="#000" stroke-width="1.2" stroke-linejoin="round"/></svg>
<svg class="ic" style="left:1150px;top:96px" viewBox="0 0 16 16"><circle cx="7.5" cy="8" r="6" fill="none" stroke="#3aa64a" stroke-width="1.6"/><circle cx="7.5" cy="8" r="3" fill="#2f8f3f"/></svg>
<div class="t tab" style="left:1169px;top:97px;letter-spacing:1.15px">Make</div>
<div class="minb" style="left:1241px;top:97px"></div><div class="maxb" style="left:1259px;top:97px"></div>
<!-- outline toolbar -->
<svg class="ic" style="left:1112px;top:130px" viewBox="0 0 16 16"><path d="M2.5 1.5 L2.5 14 M0.5 11 L2.5 14 L4.5 11" fill="none" stroke="#5a5a5a" stroke-width="1.1"/><text x="5" y="7.8" font-family="Liberation Serif" font-weight="bold" font-size="11" fill="#2e8a6a">a</text><text x="8.2" y="15.8" font-family="Liberation Serif" font-weight="bold" font-size="11" fill="#a02a8a">z</text></svg>
<svg class="ic" style="left:1141px;top:130px" viewBox="0 0 16 16"><circle cx="8" cy="8" r="6" fill="#4a96d8" stroke="#2a6aa8"/><circle cx="8" cy="8" r="3" fill="#a8d0f0"/><path d="M1 1 L15 15" stroke="#1a2a5a" stroke-width="1.4"/></svg>
<svg class="ic" style="left:1168px;top:130px" viewBox="0 0 16 16"><circle cx="6" cy="10" r="4" fill="#8a8a9a" stroke="#5a5a6a"/><text x="9.5" y="7" font-family="Liberation Sans" font-size="8" fill="#c02a6a">S</text><path d="M0.5 5 L12 15" stroke="#1a2a5a" stroke-width="1.4"/></svg>
<svg class="ic" style="left:1199px;top:131px" viewBox="0 0 16 16"><circle cx="5.2" cy="5.6" r="3.8" fill="#6cc070" stroke="#3a8a44" stroke-width="0.9"/></svg>
<svg class="ic" style="left:1225px;top:130px" viewBox="0 0 16 16"><path d="M5 1 L4 15 M10 1 L9 15 M1 5 L15 5 M1 10 L15 10" stroke="#000" stroke-width="2"/><path d="M2 2 L14 14" stroke="#222" stroke-width="1"/></svg>
<svg class="a" style="left:1255px;top:129px" width="12" height="7" viewBox="0 0 12 7"><path d="M1 1 L11 1 L6 6 Z" fill="#fff" stroke="#000" stroke-width="1.3"/></svg>
<div class="a" style="left:1040px;top:154px;width:235px;height:272px;background:#fff"></div>
<svg class="ic" style="left:1053px;top:160px" viewBox="0 0 16 16"><rect x="3" y="1" width="5" height="6" fill="#3a78c0"/><path d="M10 1 L14 1 L14 13 L6 13 L6 9 L10 9 Z" fill="#3a78c0"/><path d="M4 8 L7.5 14.5 L0.5 14.5 Z" fill="#f6c342" stroke="#a8801a" stroke-width="0.8"/></svg>
<div class="t tree" style="left:1078px;top:158px;letter-spacing:1.1px">iostream</div>
<svg class="ic" style="left:1054px;top:182px" viewBox="0 0 16 16"><rect x="2" y="2" width="6" height="2.5" fill="#c87a7a"/><rect x="2" y="6" width="12" height="2.5" fill="#b060a8"/><rect x="2" y="10" width="8" height="2.5" fill="#5a8ad0"/></svg>
<div class="t tree" style="left:1078px;top:181px">std</div>
<svg class="ic" style="left:1052px;top:206px" viewBox="0 0 16 16"><circle cx="10" cy="7" r="3.6" fill="#4ab05a" stroke="#2a7a3a" stroke-width="0.8"/><rect x="0.5" y="8.5" width="7" height="7" fill="#e0434b" stroke="#a02028" stroke-width="0.7"/><path d="M2 10 L6 14 M6 10 L2 14" stroke="#fff" stroke-width="1"/></svg>
<div class="t tree" style="left:1078px;top:204px">main()<span style="color:#95805a"> : int</span></div>

<!-- ============ PROBLEMS ============ -->
<div class="pbox" style="left:277px;top:433px;width:999px;height:333px"></div>
<svg class="a" style="left:278px;top:434px" width="997" height="52" viewBox="0 0 997 52">
<path d="M0 52 L0 7 Q0 0 7 0 L100.5 0 C105.5 0 108.5 3 111.5 6.5 L122.5 18.5 C127.5 24 133.5 31 143 31 L997 31 L997 52 Z" fill="url(#tabw)"/>
<rect x="0" y="31" width="997" height="21" fill="#f0efee"/>
<path d="M100.5 -0.5 C105.5 -0.5 108.5 2.5 111.5 6 L122.5 18 C127.5 23.5 133.5 30.5 143 30.5 L997 30.5" fill="none" stroke="#a6a6a6"/>
<path d="M193.5 30.5 L193.5 5 Q193.5 -0.5 188 -0.5 M279.5 30.5 L279.5 5 Q279.5 -0.5 274 -0.5 M379.5 30.5 L379.5 5 Q379.5 -0.5 374 -0.5 M464.5 30.5 L464.5 5 Q464.5 -0.5 459 -0.5 M537.5 30.5 L537.5 5 Q537.5 -0.5 532 -0.5" fill="none" stroke="#a6a6a6"/>
<path d="M0 51.5 L997 51.5" stroke="#a6a6a6"/>
</svg>
<svg class="ic" style="left:281px;top:441px" viewBox="0 0 16 16"><rect x="6.5" y="0.5" width="9" height="15" fill="#fff" stroke="#8a8aa0"/><circle cx="7" cy="5" r="3.5" fill="#e0434b"/><path d="M10 7 Q13 7 13 10 L13 15 M10 15 L10 9" fill="none" stroke="#5a6a9a" stroke-width="1"/><rect x="0.5" y="8.5" width="7" height="7" fill="#e0434b" stroke="#a02028" stroke-width="0.7"/><path d="M2 10 L6 14 M6 10 L2 14" stroke="#fff" stroke-width="1"/></svg>
<div class="t tab" style="left:301px;top:442px">Problems</div>
<svg class="x" style="left:374px;top:444px" viewBox="0 0 10 10"><path d="M0.6 0.6 L3.2 0.6 L5 2.6 L6.8 0.6 L9.4 0.6 L9.4 3.2 L7.4 5 L9.4 6.8 L9.4 9.4 L6.8 9.4 L5 7.4 L3.2 9.4 L0.6 9.4 L0.6 6.8 L2.6 5 L0.6 3.2 Z" fill="#fff" stroke="#000" stroke-width="1.2" stroke-linejoin="round"/></svg>
<svg class="ic" style="left:412px;top:441px" viewBox="0 0 16 16"><rect x="4.5" y="2.5" width="10" height="13" fill="#fff" stroke="#9a9a9a"/><rect x="7" y="0.5" width="5" height="3" fill="#c8c8c8" stroke="#8a8a8a" stroke-width="0.7"/><path d="M0.5 9 L3.5 12.5 L9 5" fill="none" stroke="#2a6ac8" stroke-width="2"/><path d="M10 7 L13 7 M10 9.5 L13 9.5 M10 12 L13 12" stroke="#6a7a9a"/></svg>
<div class="t tab" style="left:431px;top:442px;letter-spacing:0.3px">Tasks</div>
<svg class="ic" style="left:478px;top:441px" viewBox="0 0 16 16"><rect x="0.5" y="0.5" width="14" height="11" fill="#3a68b0" stroke="#1e3e80"/><rect x="2.5" y="2.5" width="10" height="7" fill="#dce8f8"/><path d="M4 5 L9 5 M4 7 L7 7" stroke="#3a68b0"/><rect x="3" y="13" width="9" height="2" fill="#3a68b0"/></svg>
<div class="t tab" style="left:497px;top:442px;font-weight:bold;letter-spacing:0.2px;color:#3a3a3a">Console</div>
<svg class="ic" style="left:564px;top:441px" viewBox="0 0 16 16"><rect x="0.5" y="1.5" width="14" height="11" fill="#fff" stroke="#7a8aa0"/><rect x="0.5" y="1.5" width="14" height="2.5" fill="#a8b8d0"/><path d="M1 6.5 L14 6.5 M1 9 L14 9 M4.5 4 L4.5 12" stroke="#7a8aa0" stroke-width="0.8"/></svg>
<div class="t tab" style="left:582px;top:442px;letter-spacing:0.9px">Properties</div>
<svg class="ic" style="left:663px;top:441px" viewBox="0 0 16 16"><path d="M0.5 1 L4 1 L7 11 L10 1 L11 1 L7 15 L5.5 15 Z" fill="#9a1e1e"/><circle cx="11" cy="11" r="3.5" fill="#e8c040" stroke="#2a2a2a" stroke-width="1.4" stroke-dasharray="1.5 1"/><circle cx="11" cy="11" r="1.2" fill="#2a2a2a"/></svg>
<div class="t tab" style="left:682px;top:442px;letter-spacing:0.95px">Valgrind</div>
<svg class="ic" style="left:747px;top:441px" viewBox="0 0 16 16"><path d="M3 11 L11 2.5 L14 5.5 L6 13.5 Z" fill="#f3d89a" stroke="#a98a40" stroke-width="0.9"/><path d="M1 13 L4 10 L7 13 L4 15.5 Z" fill="#fff6cc" stroke="#b9a46a" stroke-width="0.9"/><path d="M5 9 L10 4 L12 6 L7 11 Z" fill="#8a8a8a"/></svg>
<div class="t tab" style="left:767px;top:442px;letter-spacing:0.35px">Search</div>
<svg class="a" style="left:1218px;top:443px" width="12" height="7" viewBox="0 0 12 7"><path d="M1 1 L11 1 L6 6 Z" fill="#fff" stroke="#000" stroke-width="1.3"/></svg>
<div class="minb" style="left:1241px;top:442px"></div><div class="maxb" style="left:1258px;top:442px"></div>
<div class="t" style="left:280px;top:468px;letter-spacing:0.33px">3 errors, 0 warnings, 0 others</div>
<!-- table -->
<div class="a" style="left:278px;top:486px;width:997px;height:24px;background:linear-gradient(#fbfbfb,#efefef)"></div>
<div class="a" style="left:278px;top:510px;width:997px;height:1px;background:#a6a6a6"></div>
<div class="a" style="left:278px;top:511px;width:997px;height:236px;background:#fff"></div>
<div class="a" style="left:278px;top:511px;width:995px;height:23px;background:linear-gradient(#eaeaea,#d9d9d9)"></div>
<div class="a" style="left:278px;top:534px;width:995px;height:23px;background:#efefef"></div>
<div class="a" style="left:278px;top:580px;width:995px;height:23px;background:#efefef"></div>
<div class="colsep" style="left:629px"></div><div class="colsep" style="left:734px"></div><div class="colsep" style="left:874px"></div><div class="colsep" style="left:979px"></div>
<div class="dots" style="left:629px"></div><div class="dots" style="left:734px"></div><div class="dots" style="left:874px"></div><div class="dots" style="left:979px"></div>
<div class="t th" style="left:285px">Description</div>
<div class="t th" style="left:635px;letter-spacing:0.15px">Resource</div>
<div class="t th" style="left:740px">Path</div>
<div class="t th" style="left:880px;letter-spacing:1.15px">Location</div>
<div class="t th" style="left:986px;letter-spacing:0.35px">Type</div>
<div class="a" style="left:278px;top:485px;width:2px;height:262px;background:#f0efee"></div>
<div class="tri-d" style="left:281px;top:519px"></div>
<svg class="a" style="left:295px;top:515px" width="13" height="13" viewBox="0 0 13 13"><circle cx="6.5" cy="6.5" r="6" fill="#e03a46" stroke="#b02030" stroke-width="0.8"/><circle cx="6.5" cy="6.5" r="4.5" fill="#f05560"/><path d="M4 4 L9 9 M9 4 L4 9" stroke="#fff" stroke-width="1.6"/></svg>
<div class="t row" style="left:313px;top:514px">Errors (3 items)</div>
<svg class="ic" style="left:305px;top:538px" viewBox="0 0 16 16"><circle cx="4.3" cy="4.3" r="3.2" fill="#fffbe6" stroke="#e3a54a" stroke-width="1.1"/><path d="M3 2.5 Q2 4 3 5.5" stroke="#f4e040" stroke-width="1" fill="none"/><path d="M3.5 7.5 L3.5 12 M4.5 12 L5.5 12" stroke="#46508a" stroke-width="1.1"/><rect x="6" y="5" width="7" height="8" fill="#c8383e" stroke="#a02830" stroke-width="0.6"/><path d="M7.8 7 L11.2 11 M11.2 7 L7.8 11" stroke="#fff" stroke-width="1.1"/></svg>
<svg class="ic" style="left:305px;top:561px" viewBox="0 0 16 16"><circle cx="4.3" cy="4.3" r="3.2" fill="#fffbe6" stroke="#e3a54a" stroke-width="1.1"/><path d="M3 2.5 Q2 4 3 5.5" stroke="#f4e040" stroke-width="1" fill="none"/><path d="M3.5 7.5 L3.5 12 M4.5 12 L5.5 12" stroke="#46508a" stroke-width="1.1"/><rect x="6" y="5" width="7" height="8" fill="#c8383e" stroke="#a02830" stroke-width="0.6"/><path d="M7.8 7 L11.2 11 M11.2 7 L7.8 11" stroke="#fff" stroke-width="1.1"/></svg>
<svg class="ic" style="left:305px;top:584px" viewBox="0 0 16 16"><circle cx="4.3" cy="4.3" r="3.2" fill="#fffbe6" stroke="#e3a54a" stroke-width="1.1"/><path d="M3 2.5 Q2 4 3 5.5" stroke="#f4e040" stroke-width="1" fill="none"/><path d="M3.5 7.5 L3.5 12 M4.5 12 L5.5 12" stroke="#46508a" stroke-width="1.1"/><rect x="6" y="5" width="7" height="8" fill="#c8383e" stroke="#a02830" stroke-width="0.6"/><path d="M7.8 7 L11.2 11 M11.2 7 L7.8 11" stroke="#fff" stroke-width="1.1"/></svg>
<div class="t row" style="left:324px;top:538px">Symbol 'cout' could not be resolved</div>
<div class="t row" style="left:324px;top:561px">Symbol 'endl' could not be resolved</div>
<div class="t row" style="left:324px;top:584px">Symbol 'std' could not be resolved</div>
<div class="a" style="left:636px;top:534px;width:97px;height:69px;overflow:hidden;letter-spacing:0.8px"><div class="t row" style="left:0;top:4px;letter-spacing:0.8px">HelloWorld.cpp</div><div class="t row" style="left:0;top:27px;letter-spacing:0.8px">HelloWorld.cpp</div><div class="t row" style="left:0;top:50px;letter-spacing:0.8px">HelloWorld.cpp</div></div>
<div class="t row" style="left:741px;top:538px;letter-spacing:1.05px">/HelloWorld/src</div>
<div class="t row" style="left:741px;top:561px;letter-spacing:1.05px">/HelloWorld/src</div>
<div class="t row" style="left:741px;top:584px;letter-spacing:1.05px">/HelloWorld/src</div>
<div class="t row" style="left:881px;top:538px">line 13</div>
<div class="t row" style="left:881px;top:561px">line 13</div>
<div class="t row" style="left:881px;top:584px">line 10</div>
<div class="t row" style="left:986px;top:538px">Semantic Error</div>
<div class="t row" style="left:986px;top:561px">Semantic Error</div>
<div class="t row" style="left:986px;top:584px">Semantic Error</div>
<!-- problems scrollbar -->
<div class="a" style="left:278px;top:747px;width:997px;height:18px;background:#f0efee"></div>
<div class="hsb" style="left:281px;top:750px;width:992px"></div>
<div class="thumb" style="left:293px;top:750px;width:866px"></div>
<div class="grip" style="left:720px;top:753px"></div>
<div class="arrl" style="left:285px;top:753px"></div>
<div class="arrr" style="left:1264px;top:753px"></div>

<!-- ============ STATUS BAR ============ -->
<div class="a" style="left:8px;top:770px;width:1px;height:26px;background:#a0a0a0"></div>
<div class="a" style="left:5px;top:795px;width:4px;height:1px;background:#a0a0a0"></div>
<svg class="a" style="left:20px;top:776px" width="16" height="16" viewBox="0 0 16 16"><rect x="1.5" y="2.5" width="5" height="11" fill="#fff" stroke="#6a7a8a"/><rect x="1" y="2" width="6" height="2" fill="#3a68b0"/><path d="M11.5 0 L11.5 6 M8.5 3 L14.5 3" stroke="#d9a400" stroke-width="1.6"/><path d="M11.5 1.3 L11.5 4.7 M9.8 3 L13.2 3" stroke="#fff1a8" stroke-width="0.8"/></svg>
<div class="a" style="left:611px;top:768px;width:1px;height:25px;background:#d8d6d3"></div>
<div class="a" style="left:730px;top:768px;width:1px;height:25px;background:#d8d6d3"></div>
<div class="a" style="left:842px;top:768px;width:1px;height:25px;background:#d8d6d3"></div>
<div class="a" style="left:958px;top:770px;width:1px;height:26px;background:#a0a0a0"></div>
<div class="t" style="left:619px;top:773px;letter-spacing:1.3px">Writable</div>
<div class="t" style="left:738px;top:773px;letter-spacing:0.7px">Smart Insert</div>
<div class="t" style="left:850px;top:773px;letter-spacing:-0.2px">16 : 1</div>
<svg class="a" style="left:543px;top:396px" width="16" height="22" viewBox="0 0 16 22"><path d="M1.5 1.5 L1.5 18 L5.3 14.3 L8.3 20.3 L11 19 L8.2 13.2 L13.3 13.2 Z" fill="#fff" stroke="#000" stroke-width="1.6" stroke-linejoin="round"/></svg>

</body></html>
